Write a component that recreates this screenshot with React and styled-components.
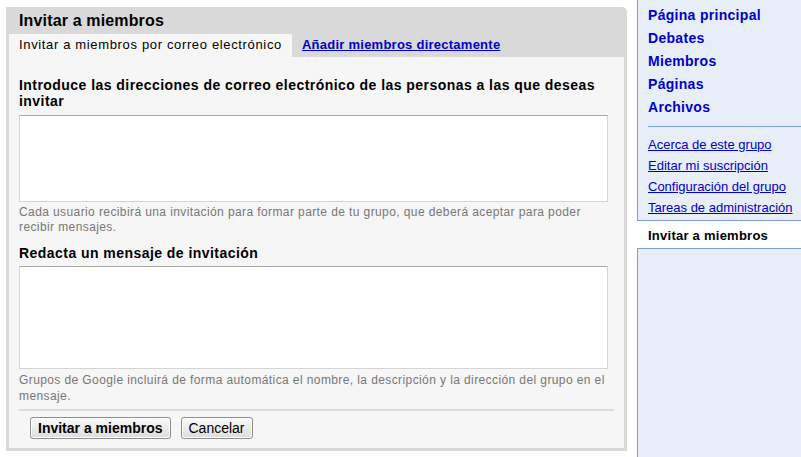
import styled, { createGlobalStyle } from "styled-components";

const GlobalStyle = createGlobalStyle`
  body {
    margin: 0;
    background: #fff;
    font-family: "Liberation Sans", Arial, sans-serif;
  }
`;

const Page = styled.div`
  display: flex;
  align-items: flex-start;
  width: 801px;
  height: 457px;
  overflow: hidden;
`;

const Panel = styled.section`
  margin: 7px 0 0 6px;
  width: 621px;
  height: 444px;
  background: #d9d9d9;
  border-top-right-radius: 5px;
  display: flex;
  flex-direction: column;
`;

const PanelTitle = styled.h2`
  margin: 0;
  padding-left: 13px;
  height: 27px;
  line-height: 27px;
  font-size: 16px;
  font-weight: bold;
  letter-spacing: 0.15px;
  color: #000;
`;

const Tabs = styled.div`
  display: flex;
  align-items: stretch;
  height: 23px;
  padding-left: 3px;
`;

const Tab = styled.div`
  padding: 0 10px;
  line-height: 22px;
  font-size: 13px;
  letter-spacing: 0.65px;
  background: ${(p) => (p.$active ? "#f6f6f6" : "transparent")};
  color: #000;
`;

const TabLink = styled.a`
  color: #0000cc;
  font-weight: bold;
  letter-spacing: 0.25px;
  text-decoration: underline;
  cursor: pointer;
`;

const Content = styled.div`
  flex: 1;
  margin: 0 3px 3px;
  background: #f6f6f6;
  padding: 20px 10px 0;
`;

const FieldLabel = styled.h3`
  margin: ${(p) => p.$top || 0}px 0 0;
  width: 595px;
  font-size: 14px;
  line-height: 16px;
  font-weight: bold;
  letter-spacing: 0.45px;
  color: #000;
`;

const TextBox = styled.textarea`
  display: block;
  box-sizing: border-box;
  width: 589px;
  height: ${(p) => p.$h}px;
  margin: ${(p) => p.$top}px 0 0;
  border: 1px solid #d4d4d4;
  border-top-color: #aaa;
  background: #fff;
  resize: none;
  font: inherit;
`;

const Hint = styled.p`
  margin: ${(p) => p.$top}px 0 0;
  font-size: 12px;
  line-height: ${(p) => p.$lh || 15}px;
  letter-spacing: 0.4px;
  color: #777;
  width: 595px;
`;

const Divider = styled.hr`
  margin: 5px 0 0;
  width: 595px;
  border: 0;
  border-top: 2px solid #dcdcdc;
`;

const Actions = styled.div`
  display: flex;
  gap: 10px;
  padding: 6px 0 0 11px;
`;

const Button = styled.button`
  height: 22px;
  padding: 0 7px;
  font-family: "Liberation Sans", Arial, sans-serif;
  font-size: 14px;
  font-weight: ${(p) => (p.$primary ? "bold" : "normal")};
  color: #000;
  border: 1px solid #8f8f8f;
  border-radius: 3px;
  background: linear-gradient(#fafafa, #dcdcdc);
  box-shadow: inset 0 0 0 1px #fff;
`;

const Sidebar = styled.aside`
  margin-left: 10px;
  width: 164px;
  height: 457px;
  display: flex;
  flex-direction: column;
`;

const NavBox = styled.nav`
  background: #e8eef7;
  border-left: 1px solid #7f9fdc;
  border-bottom: 1px solid #7f9fdc;
  padding: 4px 0 2px 10px;
`;

const MainLinks = styled.ul`
  list-style: none;
  margin: 0;
  padding: 0 0 7px;
  border-bottom: 1px solid #7f9fdc;
`;

const MainLink = styled.li`
  line-height: 23px;
  font-size: 14px;
  font-weight: bold;
  letter-spacing: 0.3px;
  color: #0000cc;
`;

const SubLinks = styled.ul`
  list-style: none;
  margin: 0;
  padding: 7px 0 0;
`;

const SubLink = styled.li`
  line-height: 21px;
  font-size: 13px;
  color: #0000cc;
  text-decoration: underline;
  white-space: nowrap;
`;

const Current = styled.div`
  height: 27px;
  line-height: 30px;
  padding-left: 11px;
  font-size: 13px;
  font-weight: bold;
  letter-spacing: 0.25px;
  color: #000;
`;

const FillBox = styled.div`
  flex: 1;
  background: #e8eef7;
  border-left: 1px solid #7f9fdc;
  border-top: 1px solid #7f9fdc;
`;

export default function App() {
  return (
    <>
      <GlobalStyle />
      <Page>
        <Panel>
          <PanelTitle>Invitar a miembros</PanelTitle>
          <Tabs>
            <Tab $active>Invitar a miembros por correo electrónico</Tab>
            <Tab>
              <TabLink>Añadir miembros directamente</TabLink>
            </Tab>
          </Tabs>
          <Content>
            <FieldLabel>
              Introduce las direcciones de correo electrónico de las personas a las que deseas invitar
            </FieldLabel>
            <TextBox $h={87} $top={6} />
            <Hint $top={3}>
              Cada usuario recibirá una invitación para formar parte de tu grupo, que deberá aceptar para poder recibir mensajes.
            </Hint>
            <FieldLabel $top={10}>Redacta un mensaje de invitación</FieldLabel>
            <TextBox $h={103} $top={5} />
            <Hint $top={3} $lh={16}>
              Grupos de Google incluirá de forma automática el nombre, la descripción y la dirección del grupo en el mensaje.
            </Hint>
            <Divider />
            <Actions>
              <Button $primary>Invitar a miembros</Button>
              <Button>Cancelar</Button>
            </Actions>
          </Content>
        </Panel>
        <Sidebar>
          <NavBox>
            <MainLinks>
              <MainLink>Página principal</MainLink>
              <MainLink>Debates</MainLink>
              <MainLink>Miembros</MainLink>
              <MainLink>Páginas</MainLink>
              <MainLink>Archivos</MainLink>
            </MainLinks>
            <SubLinks>
              <SubLink>Acerca de este grupo</SubLink>
              <SubLink>Editar mi suscripción</SubLink>
              <SubLink>Configuración del grupo</SubLink>
              <SubLink>Tareas de administración</SubLink>
            </SubLinks>
          </NavBox>
          <Current>Invitar a miembros</Current>
          <FillBox />
        </Sidebar>
      </Page>
    </>
  );
}
